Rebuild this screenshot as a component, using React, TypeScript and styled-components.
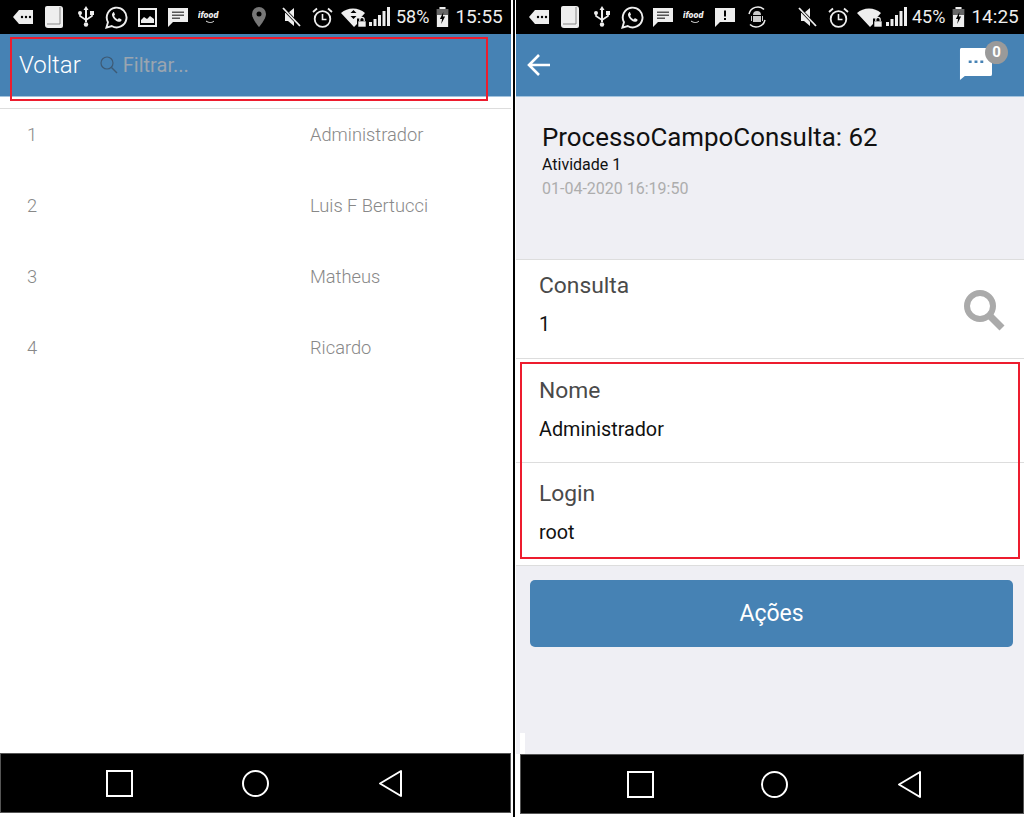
import styled, { createGlobalStyle } from "styled-components"

const GlobalStyle = createGlobalStyle`
  html, body {
    margin: 0;
    padding: 0;
    background: #fff;
    font-family: Roboto, "Liberation Sans", sans-serif;
  }
`

const Screens = styled.div`
  width: 1024px;
  height: 817px;
  display: flex;
  align-items: flex-start;
  overflow: hidden;
  background: #fff;
`

const LeftPhone = styled.div`
  width: 511px;
  height: 813px;
  display: flex;
  flex-direction: column;
  background: #fff;
  flex: 0 0 auto;
`

const Divider = styled.div`
  width: 2px;
  height: 817px;
  margin-left: 2px;
  flex: 0 0 auto;
  background: #000;
`

const StatusBar = styled.div`
  height: 34px;
  flex: 0 0 auto;
  background: #000;
  color: #eee;
  display: flex;
  align-items: center;
  position: relative;
`

const StatusGroup = styled.div<{ $left: number }>`
  position: absolute;
  left: ${(p) => p.$left}px;
  top: 5px;
  height: 24px;
  display: flex;
  align-items: center;
`

const StatusText = styled.span<{ $size: number; $ml: number }>`
  font-size: ${(p) => p.$size}px;
  margin-left: ${(p) => p.$ml}px;
  color: #eee;
  line-height: 24px;
`

const AppBar = styled.div`
  height: 62px;
  flex: 0 0 auto;
  background: #4682b4;
  border-bottom: 1px solid #a4c4de;
  display: flex;
  align-items: center;
  position: relative;
`

const BackLabel = styled.span`
  margin-left: 19px;
  color: #fff;
  font-size: 24px;
  font-weight: 300;
`

const FilterIcon = styled.svg`
  margin-left: 18px;
  width: 20px;
  height: 20px;
`

const FilterText = styled.span`
  margin-left: 4px;
  color: #9aa5b0;
  font-size: 20px;
  font-weight: 400;
`

const Highlight = styled.div`
  position: absolute;
  border: 2px solid #ed1c2e;
  pointer-events: none;
  box-sizing: border-box;
`

const TopHighlight = styled(Highlight)`
  left: 10px;
  top: 3px;
  width: 478px;
  height: 64px;
`

const Content = styled.div`
  flex: 1;
  display: flex;
  flex-direction: column;
`

const ListRule = styled.div`
  margin-top: 11px;
  height: 1px;
  background: #ddd;
`

const ListRow = styled.div`
  height: 71px;
  box-sizing: border-box;
  padding-top: 15px;
  display: flex;
  align-items: flex-start;
  font-size: 18.3px;
  line-height: 22px;
  font-weight: 300;
  color: #888;
`

const RowIndex = styled.span`
  width: 310px;
  padding-left: 27px;
  box-sizing: border-box;
`

const NavBar = styled.div`
  height: 60px;
  flex: 0 0 auto;
  box-sizing: border-box;
  background: #000;
  border: 1px solid #555;
  position: relative;
  display: flex;
  align-items: center;
`

const NavIcon = styled.svg<{ $left: number }>`
  position: absolute;
  left: ${(p) => p.$left}px;
  top: 14px;
  width: 30px;
  height: 30px;
`

const RightPhone = styled.div`
  flex: 1;
  height: 814px;
  box-sizing: border-box;
  padding-left: 1px;
  display: flex;
  flex-direction: column;
  position: relative;
`

const TitleBlock = styled.div`
  height: 162px;
  box-sizing: border-box;
  padding: 25px 0 0 26px;
  background: #efeff4;
`

const Title = styled.div`
  font-size: 25.9px;
  line-height: 30px;
  margin-bottom: 1px;
  color: #111;
`

const Subtitle = styled.div`
  font-size: 16px;
  line-height: 24px;
  color: #111;
`

const Timestamp = styled.div`
  font-size: 16px;
  line-height: 24px;
  color: #adadad;
`

const Field = styled.div<{ $h: number; $pad: number }>`
  height: ${(p) => p.$h}px;
  box-sizing: border-box;
  background: #fff;
  border-top: 1px solid #ddd;
  padding: ${(p) => p.$pad}px 23px 0;
  position: relative;
`

const FieldLabel = styled.div`
  font-size: 22.8px;
  line-height: 28px;
  color: #4a4a4a;
`

const FieldValue = styled.div`
  font-size: 19.8px;
  line-height: 26px;
  margin-top: 12px;
  color: #111;
`

const SearchGlyph = styled.svg`
  position: absolute;
  right: 19px;
  top: 29px;
  width: 42px;
  height: 42px;
`

const FieldsHighlight = styled(Highlight)`
  left: 5px;
  top: 362px;
  width: 500px;
  height: 197px;
`

const Actions = styled.div`
  flex: 1;
  border-top: 1px solid #ddd;
  background: #efeff4;
  padding: 14px 11px 0 14px;
  position: relative;
`

const ActionButton = styled.button`
  width: 100%;
  height: 67px;
  border: none;
  border-radius: 5px;
  background: #4682b4;
  color: #fff;
  font-family: inherit;
  font-size: 23px;
`

const ChatWrap = styled.div`
  position: absolute;
  right: 16px;
  top: 13px;
  width: 49px;
  height: 38px;
`

const ChatBubble = styled.svg`
  position: absolute;
  left: 0;
  top: 0;
  width: 33px;
  height: 33px;
`

const ChatBadge = styled.span`
  position: absolute;
  right: 0;
  top: -6px;
  width: 23px;
  height: 23px;
  border-radius: 50%;
  background: #9a9a9a;
  color: #fff;
  font-size: 15px;
  font-weight: 700;
  text-align: center;
  line-height: 22px;
`

const BackArrow = styled.svg`
  margin-left: 11px;
  width: 24px;
  height: 24px;
`

const Sliver = styled.div`
  position: absolute;
  left: 5px;
  bottom: 60px;
  width: 5px;
  height: 21px;
  background: #fff;
`

const RightNavWrap = styled.div`
  padding-left: 4px;
  background: #fff;
`

const StatusIcon = styled.svg<{ $ml?: number }>`
  margin-left: ${(p) => p.$ml ?? 0}px;
  flex: 0 0 auto;
`

function Notif() {
  return (
    <StatusIcon width="20" height="18" viewBox="0 0 20 18">
      <path d="M6 2h14v14H6L0 9z" fill="#eee" />
      <circle cx="9" cy="9" r="1.2" fill="#000" />
      <circle cx="13" cy="9" r="1.2" fill="#000" />
      <circle cx="17" cy="9" r="1.2" fill="#000" />
    </StatusIcon>
  )
}

function Book() {
  return (
    <StatusIcon $ml={12} width="19" height="22" viewBox="0 0 19 22">
      <path d="M2 0h13a3 3 0 0 1 3 3v17a2 2 0 0 1-2 2H3a3 3 0 0 1-3-3V2a2 2 0 0 1 2-2z" fill="#eee" />
      <path d="M15 1v17H2" fill="none" stroke="#888" strokeWidth="1" />
    </StatusIcon>
  )
}

function Usb() {
  return (
    <StatusIcon $ml={14} width="16" height="22" viewBox="0 0 16 22">
      <path d="M8 0l2.500 4H9v12H7V4H5.500z" fill="#eee" />
      <circle cx="8" cy="18.500" r="2.200" fill="#eee" />
      <rect x="12" y="5" width="4" height="4" fill="#eee" />
      <circle cx="2" cy="7" r="2" fill="#eee" />
      <path d="M2 8v2l6 4 6-4V8" fill="none" stroke="#eee" strokeWidth="1.600" />
    </StatusIcon>
  )
}

function Whatsapp() {
  return (
    <StatusIcon $ml={11} width="23" height="23" viewBox="0 0 24 24">
      <path d="M1.500 22.500l1.600-5.600A10.300 10.300 0 1 1 7 20.900z" fill="none" stroke="#eee" strokeWidth="2" />
      <path d="M8.500 6.800c-.8.500-1.500 1.700-1.100 3.200.7 2.800 3.800 5.900 6.700 6.500 1.500.3 2.700-.5 3.100-1.400.2-.6.100-1-.3-1.200l-2-1c-.4-.2-.7-.1-.9.200l-.7.900c-1.800-.7-3.100-2-3.800-3.700l.7-.8c.2-.3.300-.6.100-.9l-.9-2c-.2-.4-.6-.5-.9-.2z" fill="#eee" />
    </StatusIcon>
  )
}

function Picture() {
  return (
    <StatusIcon $ml={10} width="19" height="19" viewBox="0 0 19 19">
      <rect x="1" y="1" width="17" height="17" fill="none" stroke="#eee" strokeWidth="2" />
      <path d="M3 15V12l3-3 3 2 3-3 4 3v4z" fill="#eee" />
    </StatusIcon>
  )
}

function Message({ bang, ml }: { bang?: boolean; ml: number }) {
  return (
    <StatusIcon $ml={ml} width="20" height="20" viewBox="0 0 20 20">
      <path d="M0 1h20v14H5l-5 5z" fill="#eee" />
      {bang ? (
        <path d="M9 3.500h2v6H9zM9 11h2v2H9z" fill="#000" />
      ) : (
        <path d="M4 4.500h12v1.600H4zM4 7.500h12v1.600H4zM4 10.500h8v1.600H4z" fill="#555" />
      )}
    </StatusIcon>
  )
}

function IfoodMark() {
  return (
    <StatusIcon $ml={10} width="24" height="18" viewBox="0 0 24 18">
      <text x="0" y="10" fontFamily="Roboto, sans-serif" fontStyle="italic" fontWeight="900" fontSize="9" fill="#eee">
        ifood
      </text>
      <path d="M8 13c3 2 6 2 8 0" fill="none" stroke="#eee" strokeWidth="1" />
    </StatusIcon>
  )
}

function Android() {
  return (
    <StatusIcon $ml={11} width="22" height="22" viewBox="0 0 22 22">
      <path d="M3 8a9 9 0 0 1 15-4.500M19 14a9 9 0 0 1-15 4.500" fill="none" stroke="#eee" strokeWidth="1.500" />
      <path d="M7 9a4 4 0 0 1 8 0zM7 10h8v6H7z" fill="#ccc" />
      <path d="M5 10h1v5H5zM16 10h1v5h-1z" fill="#ccc" />
    </StatusIcon>
  )
}

function Pin() {
  return (
    <StatusIcon width="16" height="20" viewBox="0 0 16 20">
      <path d="M8 0a7 7 0 0 1 7 7c0 5-7 13-7 13S1 12 1 7a7 7 0 0 1 7-7z" fill="#777" />
      <circle cx="8" cy="7" r="2.500" fill="#000" />
    </StatusIcon>
  )
}

function Mute({ ml }: { ml: number }) {
  return (
    <StatusIcon $ml={ml} width="19" height="20" viewBox="0 0 19 20">
      <path d="M3 6h3l6-5v18l-6-5H3z" fill="#eee" />
      <path d="M1 1l17 18" stroke="#000" strokeWidth="3" />
      <path d="M1 1l17 18" stroke="#eee" strokeWidth="1.800" />
    </StatusIcon>
  )
}

function Alarm() {
  return (
    <StatusIcon $ml={11} width="21" height="21" viewBox="0 0 21 21">
      <circle cx="10.500" cy="12" r="7.800" fill="none" stroke="#eee" strokeWidth="1.800" />
      <path d="M10.500 7v5.500h4" fill="none" stroke="#eee" strokeWidth="1.600" />
      <path d="M1 5l4-3.500M20 5l-4-3.500" stroke="#eee" strokeWidth="1.800" />
    </StatusIcon>
  )
}

function WifiLock({ mark }: { mark?: boolean }) {
  return (
    <StatusIcon $ml={8} width="25" height="20" viewBox="0 0 25 20">
      <path d="M0 6a18 18 0 0 1 24 0l-5 5.500h-3V17l-3 3z" fill="#eee" />
      {mark && <path d="M12.500 3l3 3h-6zM9.500 9h6l-3 3z" fill="#000" />}
      <rect x="17" y="14" width="8" height="6" fill="#eee" stroke="#000" strokeWidth=".6" />
      <path d="M18.800 14v-1.500a2.200 2.200 0 0 1 4.400 0V14" fill="none" stroke="#eee" strokeWidth="1.200" />
    </StatusIcon>
  )
}

function Signal({ ml }: { ml: number }) {
  return (
    <StatusIcon $ml={ml} width="21" height="20" viewBox="0 0 21 20">
      <path d="M0 15h3v4H0zM4.500 12h3v7h-3zM9 8h3v11H9zM13.500 4h3v15h-3zM18 0h3v19h-3z" fill="#eee" />
    </StatusIcon>
  )
}

function Battery() {
  return (
    <StatusIcon $ml={7} width="13" height="20" viewBox="0 0 15 20" preserveAspectRatio="none">
      <path d="M4 0h7v2h3v18H1V2h3z" fill="#eee" />
      <path d="M1 2h13v6H1z" fill="#666" />
      <path d="M8.500 5L4.500 12h2.500l-1 5 4.500-7.500H8z" fill="#000" />
    </StatusIcon>
  )
}

function NavButtons({ square, circle, triangle }: { square: number; circle: number; triangle: number }) {
  return (
    <NavBar>
      <NavIcon $left={square} viewBox="0 0 30 30">
        <rect x="1" y="3" width="25" height="25" fill="none" stroke="#fff" strokeWidth="2" />
      </NavIcon>
      <NavIcon $left={circle} viewBox="0 0 30 30">
        <circle cx="15.500" cy="15.500" r="12.500" fill="none" stroke="#fff" strokeWidth="2" />
      </NavIcon>
      <NavIcon $left={triangle} viewBox="0 0 30 30">
        <path d="M25 3v25L4 15.500z" fill="none" stroke="#fff" strokeWidth="2" strokeLinejoin="round" />
      </NavIcon>
    </NavBar>
  )
}

const users = [
  ["1", "Administrador"],
  ["2", "Luis F Bertucci"],
  ["3", "Matheus"],
  ["4", "Ricardo"],
]

export default function App() {
  return (
    <Screens>
      <GlobalStyle />
      <LeftPhone>
        <StatusBar>
          <StatusGroup $left={13}>
            <Notif />
            <Book />
            <Usb />
            <Whatsapp />
            <Picture />
            <Message ml={11} />
            <IfoodMark />
          </StatusGroup>
          <StatusGroup $left={251}>
            <Pin />
            <Mute ml={15} />
            <Alarm />
            <WifiLock mark />
            <Signal ml={3} />
            <StatusText $size={18} $ml={6}>58%</StatusText>
            <Battery />
            <StatusText $size={19} $ml={6}>15:55</StatusText>
          </StatusGroup>
        </StatusBar>
        <AppBar>
          <BackLabel>Voltar</BackLabel>
          <FilterIcon viewBox="0 0 20 20">
            <circle cx="8" cy="8" r="6" fill="none" stroke="#3d5a75" strokeWidth="1.200" />
            <path d="M12.500 12.500L18 18" stroke="#3d5a75" strokeWidth="1.400" />
          </FilterIcon>
          <FilterText>Filtrar...</FilterText>
          <TopHighlight />
        </AppBar>
        <Content>
          <ListRule />
          {users.map(([id, name]) => (
            <ListRow key={id}>
              <RowIndex>{id}</RowIndex>
              <span>{name}</span>
            </ListRow>
          ))}
        </Content>
        <NavButtons square={105} circle={239} triangle={375} />
      </LeftPhone>
      <Divider />
      <RightPhone>
        <StatusBar>
          <StatusGroup $left={13}>
            <Notif />
            <Book />
            <Usb />
            <Whatsapp />
            <Message ml={9} />
            <IfoodMark />
            <Message bang ml={8} />
            <Android />
          </StatusGroup>
          <StatusGroup $left={282}>
            <Mute ml={0} />
            <Alarm />
            <WifiLock />
            <Signal ml={4} />
            <StatusText $size={18} $ml={5}>45%</StatusText>
            <Battery />
            <StatusText $size={19} $ml={6}>14:25</StatusText>
          </StatusGroup>
        </StatusBar>
        <AppBar>
          <BackArrow viewBox="0 0 24 24">
            <path d="M23 12H2M12 2L2 12l10 10" fill="none" stroke="#fff" strokeWidth="2.600" />
          </BackArrow>
          <ChatWrap>
            <ChatBubble viewBox="0 0 34 34">
              <path d="M2 1h30a2 2 0 0 1 2 2v25a2 2 0 0 1-2 2H6l-5 4V3a2 2 0 0 1 1-2z" fill="#fff" />
              <path d="M10 14h3v2.500h-3zM16 14h3v2.500h-3zM22 14h3v2.500h-3z" fill="#4682b4" />
            </ChatBubble>
            <ChatBadge>0</ChatBadge>
          </ChatWrap>
        </AppBar>
        <TitleBlock>
          <Title>ProcessoCampoConsulta: 62</Title>
          <Subtitle>Atividade 1</Subtitle>
          <Timestamp>01-04-2020 16:19:50</Timestamp>
        </TitleBlock>
        <Field $h={99} $pad={12}>
          <FieldLabel>Consulta</FieldLabel>
          <FieldValue>1</FieldValue>
          <SearchGlyph viewBox="0 0 42 42">
            <circle cx="17" cy="17" r="13" fill="none" stroke="#aaa" strokeWidth="6" />
            <path d="M26 26l13 13" stroke="#aaa" strokeWidth="7" />
          </SearchGlyph>
        </Field>
        <Field $h={104} $pad={18}>
          <FieldLabel>Nome</FieldLabel>
          <FieldValue>Administrador</FieldValue>
        </Field>
        <Field $h={103} $pad={17}>
          <FieldLabel>Login</FieldLabel>
          <FieldValue>root</FieldValue>
        </Field>
        <Actions>
          <ActionButton>Ações</ActionButton>
        </Actions>
        <Sliver />
        <RightNavWrap>
          <NavButtons square={106} circle={238} triangle={374} />
        </RightNavWrap>
        <FieldsHighlight />
      </RightPhone>
    </Screens>
  )
}
